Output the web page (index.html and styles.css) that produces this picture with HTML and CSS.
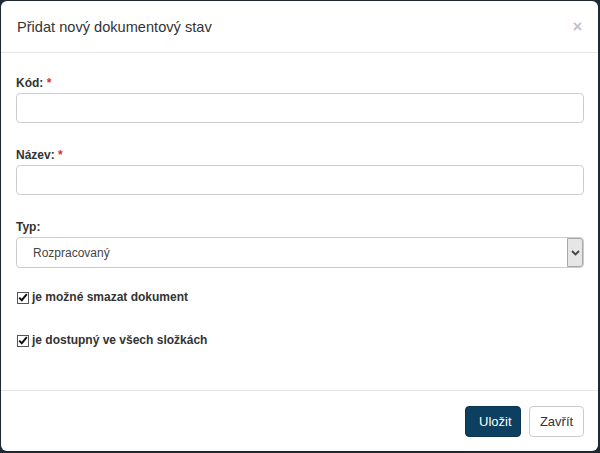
FILE: index.html
```html
<!DOCTYPE html>
<html lang="cs">
<head>
<meta charset="utf-8">
<title>Přidat nový dokumentový stav</title>
<link rel="stylesheet" href="styles.css">
</head>
<body>
<div class="modal">
  <div class="modal-header">
    <h4 class="modal-title">Přidat nový dokumentový stav</h4>
    <span class="close">×</span>
  </div>
  <div class="modal-body">
    <div class="group">
      <label class="label">Kód: <span class="req">*</span></label>
      <div class="input"></div>
    </div>
    <div class="group">
      <label class="label">Název: <span class="req">*</span></label>
      <div class="input"></div>
    </div>
    <div class="group">
      <label class="label">Typ:</label>
      <div class="select">
        <span class="select-text">Rozpracovaný</span>
        <span class="select-btn">
          <svg width="9" height="6" viewBox="0 0 9 6"><path d="M1 1 L4.5 4.5 L8 1" fill="none" stroke="#444" stroke-width="1.8"/></svg>
        </span>
      </div>
    </div>
    <label class="check">
      <span class="box"><svg width="10" height="9" viewBox="0 0 10 9"><path d="M1.2 4.6 L3.8 7.2 L8.8 1.2" fill="none" stroke="#111" stroke-width="2"/></svg></span>
      je možné smazat dokument
    </label>
    <label class="check">
      <span class="box"><svg width="10" height="9" viewBox="0 0 10 9"><path d="M1.2 4.6 L3.8 7.2 L8.8 1.2" fill="none" stroke="#111" stroke-width="2"/></svg></span>
      je dostupný ve všech složkách
    </label>
  </div>
  <div class="modal-footer">
    <button class="btn btn-primary">Uložit</button>
    <button class="btn btn-default">Zavřít</button>
  </div>
</div>
</body>
</html>
```
FILE: styles.css
```css
html, body {
  margin: 0;
  padding: 0;
}
body {
  background: #1d2a33;
  font-family: "Liberation Sans", Arial, sans-serif;
  color: #333;
  width: 600px;
  height: 453px;
  overflow: hidden;
}
.modal {
  margin: 1px 0 0 1px;
  width: 597px;
  height: 450px;
  background: #fff;
  border-radius: 6px;
  display: flex;
  flex-direction: column;
  box-sizing: border-box;
}
.modal-header {
  height: 52px;
  box-sizing: border-box;
  border-bottom: 1px solid #e5e5e5;
  display: flex;
  align-items: flex-start;
  justify-content: space-between;
  padding: 16px 16px 0 16px;
}
.modal-title {
  margin: 0;
  font-size: 14.6px;
  font-weight: normal;
  line-height: 20px;
  color: #333;
}
.close {
  font-size: 16px;
  font-weight: bold;
  color: #c2c2c2;
  line-height: 16px;
  margin-top: 2px;
}
.modal-body {
  flex: 1;
  padding: 22px 14px 0 15px;
}
.group {
  margin-bottom: 24px;
}
.label {
  display: block;
  font-size: 12px;
  font-weight: bold;
  line-height: 17px;
  margin-bottom: 1px;
  color: #333;
}
.req {
  color: #d9312b;
}
.input {
  height: 30px;
  box-sizing: border-box;
  border: 1px solid #ccc;
  border-radius: 4px;
  background: #fff;
}
.select {
  height: 31px;
  box-sizing: border-box;
  border: 1px solid #ccc;
  border-radius: 4px;
  display: flex;
  align-items: center;
  justify-content: space-between;
}
.select-text {
  font-size: 12px;
  color: #444;
  padding-left: 16px;
}
.select-btn {
  width: 16px;
  height: 29px;
  box-sizing: border-box;
  background: #e6e6e6;
  border: 1px solid #a9a9a9;
  border-radius: 0 3px 3px 0;
  display: flex;
  align-items: center;
  justify-content: center;
}
.check {
  display: flex;
  align-items: center;
  font-size: 12px;
  font-weight: bold;
  line-height: 17px;
  color: #333;
  margin-bottom: 29px;
  margin-top: -3px;
}
.box {
  width: 12px;
  height: 12px;
  box-sizing: border-box;
  border: 1px solid #555;
  background: #fff;
  display: flex;
  align-items: center;
  justify-content: center;
  margin: 0 3px 0 1px;
}
.modal-footer {
  border-top: 1px solid #e5e5e5;
  padding: 15px 14px 14px 15px;
  display: flex;
  justify-content: flex-end;
  gap: 8px;
}
.btn {
  font-family: "Liberation Sans", Arial, sans-serif;
  font-size: 13px;
  height: 31px;
  padding: 0 13px;
  border-radius: 4px;
  box-sizing: border-box;
  cursor: pointer;
}
.btn-primary {
  background: #0c3f60;
  border: 1px solid #0a3552;
  color: #fff;
  width: 56px;
}
.btn-default {
  background: #fff;
  border: 1px solid #ccc;
  color: #333;
  width: 55px;
  padding: 0;
}
```
